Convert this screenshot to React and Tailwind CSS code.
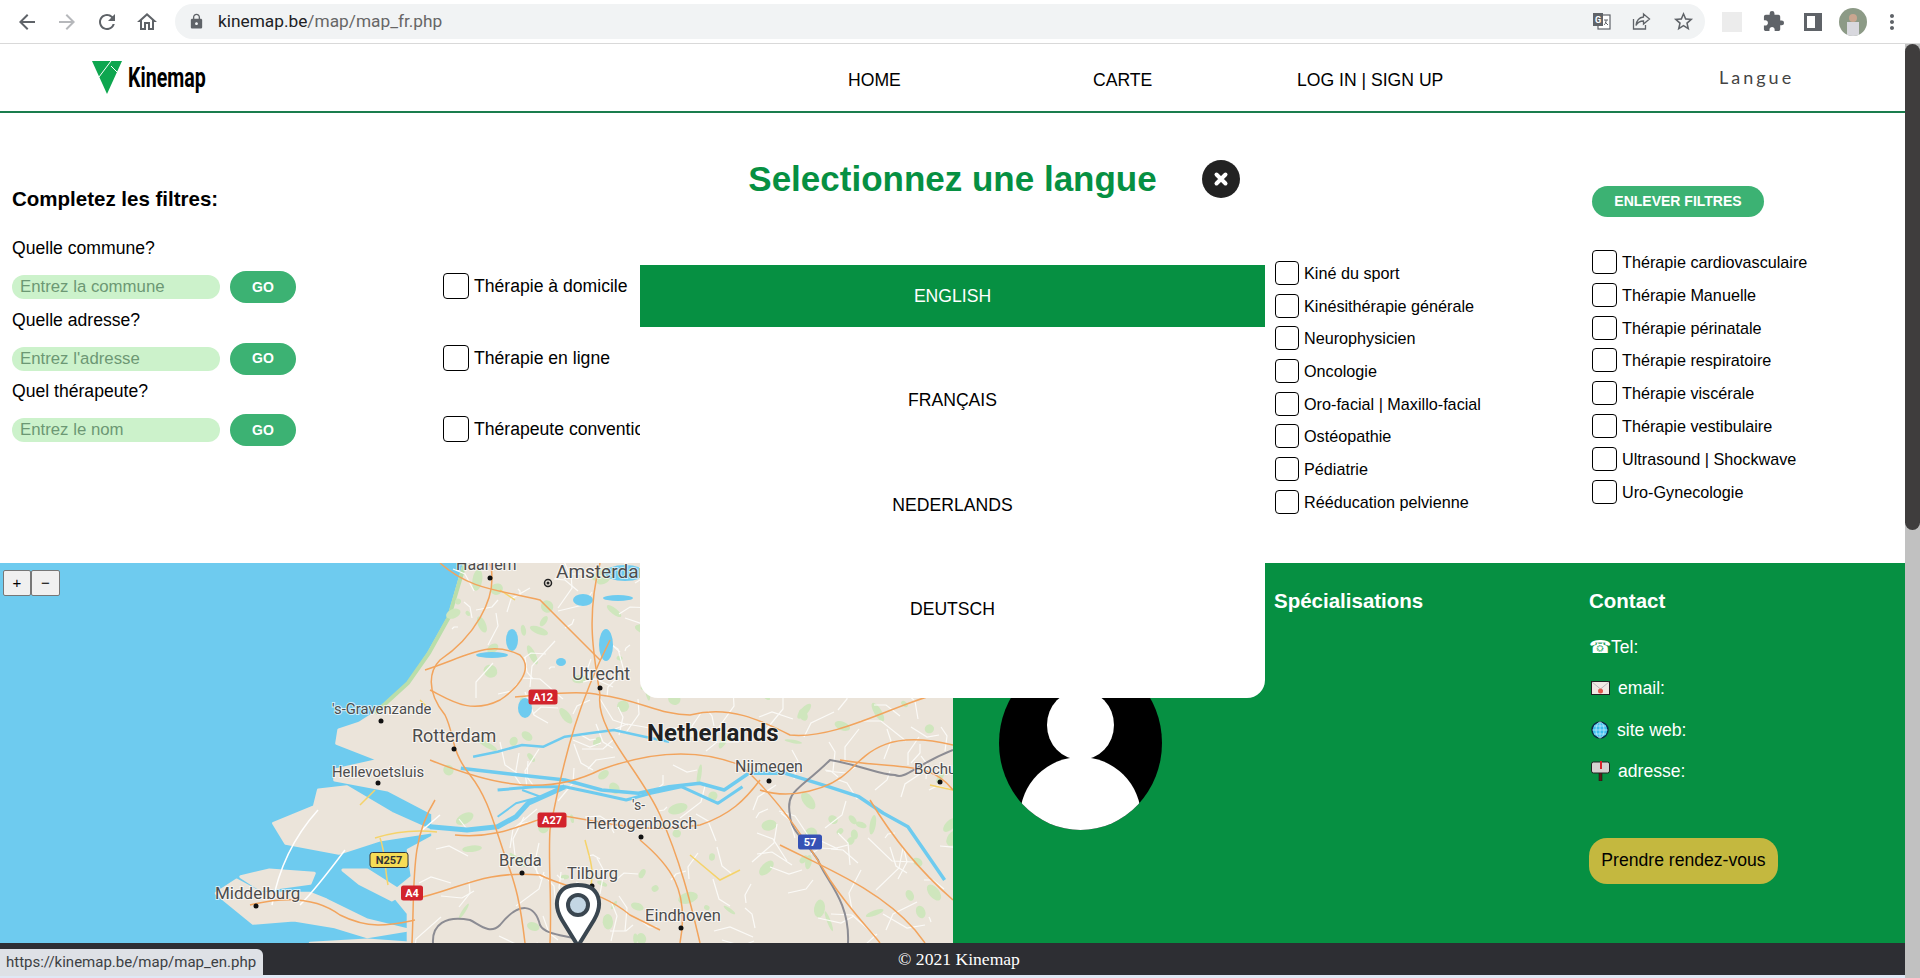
import React from 'react'
import { MdArrowBack, MdArrowForward, MdRefresh, MdOutlineHome, MdLock, MdStarBorder, MdExtension, MdMoreVert } from 'react-icons/md'

const col3 = ['Kiné du sport', 'Kinésithérapie générale', 'Neurophysicien', 'Oncologie', 'Oro-facial | Maxillo-facial', 'Ostéopathie', 'Pédiatrie', 'Rééducation pelvienne']
const col4 = ['Thérapie cardiovasculaire', 'Thérapie Manuelle', 'Thérapie périnatale', 'Thérapie respiratoire', 'Thérapie viscérale', 'Thérapie vestibulaire', 'Ultrasound | Shockwave', 'Uro-Gynecologie']

const fields = [
  { label: 'Quelle commune?', placeholder: 'Entrez la commune' },
  { label: 'Quelle adresse?', placeholder: "Entrez l'adresse" },
  { label: 'Quel thérapeute?', placeholder: 'Entrez le nom' },
]

const SEA = '#6ecbef'
const LAND = '#ebe4da'

// land outlines, noted from the map in the screenshot
const toPoly = (pts) => 'M' + pts.map(([x, y]) => `${(x / 2.45).toFixed(1)} ${(y / 3 + 560).toFixed(1)}`).join(' L') + ' Z'
const landPieces = [
  [[1140, 0], [1100, 170], [1050, 280], [1000, 370], [930, 450], [880, 490], [830, 510], [825, 550], [930, 600], [820, 630], [820, 660], [950, 690], [1060, 760], [1060, 830], [1000, 870], [1010, 950], [960, 1000], [1000, 1060], [1000, 1100], [1000, 1150], [2400, 1150], [2400, 0]],
  [[670, 790], [770, 740], [780, 690], [850, 680], [960, 760], [1060, 815], [930, 840], [830, 880], [700, 850]],
  [[590, 950], [660, 930], [770, 940], [760, 970], [640, 990]],
  [[840, 930], [900, 930], [990, 1000], [960, 1020], [880, 970]],
  [[530, 1000], [580, 960], [640, 1000], [760, 1000], [800, 1020], [900, 1080], [1000, 1110], [900, 1130], [820, 1100], [720, 1080], [620, 1090]],
  [[760, 1150], [900, 1140], [1010, 1150]],
]

const toLine = (pts) => 'M' + pts.map(([x, y]) => `${(x / 1.633 + 320).toFixed(1)} ${(y / 3 + 560).toFixed(1)}`).join(' L')
const rivers = [
  { w: 2.5, pts: [[250, 590], [290, 575], [330, 555], [365, 560], [400, 530], [440, 520], [480, 510], [530, 530], [570, 545]] },
  { w: 3.5, pts: [[230, 625], [300, 640], [400, 660], [460, 690], [520, 700], [570, 680], [620, 670], [660, 690], [700, 640], [760, 640], [830, 680], [880, 710], [920, 760], [960, 800], [990, 880], [1020, 960]] },
  { w: 3, pts: [[290, 690], [350, 680], [400, 680], [450, 700], [500, 720], [540, 700], [590, 680], [650, 730], [690, 680]] },
  { w: 5, pts: [[180, 800], [240, 810], [290, 800], [320, 770], [340, 730], [400, 680]] },
  { w: 2, pts: [[290, 770], [320, 730], [360, 710], [330, 690]] },
]
const lakes = [[525, 708, 7, 10], [606, 645, 7, 16], [583, 600, 10, 6], [512, 640, 6, 11], [492, 655, 16, 3], [561, 662, 5, 4], [625, 573, 20, 8], [618, 598, 15, 3]]

const orangeRoads = [
  'M490 563 C500 600 470 640 440 660 C430 670 425 690 445 715 C455 735 450 750 470 775 C490 800 495 830 510 870 C515 885 520 900 525 943',
  'M425 670 C470 655 490 640 520 655 C535 670 515 690 500 700 C470 715 450 700 430 690',
  'M515 697 C540 695 580 690 600 695 C640 700 660 715 690 715 C730 705 760 720 790 735 C840 740 900 700 953 690',
  'M600 563 C585 620 595 660 600 695 C595 730 640 770 660 815 C680 860 690 900 700 943',
  'M610 640 C580 700 565 750 550 830 C548 860 552 900 550 943',
  'M430 760 C480 780 540 800 600 770 C640 755 690 745 740 765 C770 790 800 830 830 880 C850 910 870 930 880 943',
  'M435 800 C410 840 415 880 412 943',
  'M455 835 C500 840 530 820 555 815 C600 820 640 835 700 825 C730 815 745 800 760 780',
  'M640 840 C670 865 690 890 680 943',
  'M780 845 C830 870 880 890 915 930 L925 943',
  'M410 900 C460 890 480 870 540 875 C570 890 600 890 630 915 L660 930',
  'M760 790 C790 800 830 790 850 770 C870 750 890 730 953 745',
  'M250 905 C290 895 320 900 340 915 C370 930 390 925 415 920',
  'M440 563 C470 590 500 590 540 600 C560 620 580 640 600 660',
  'M840 760 C900 770 930 760 953 790',
  'M870 800 C900 850 930 880 953 900',
]
const yellowRoads = [
  'M360 805 L375 790 M375 838 C400 830 420 830 437 832 M380 838 C385 850 385 870 388 885',
  'M500 590 L515 600 M690 855 L720 880 L740 870 M585 840 C590 860 595 870 590 890',
  'M930 785 L953 790 M420 700 L430 710',
]
const labels = [
  { t: 'Haarlem', x: 456, y: 570, s: 16 },
  { t: 'Amsterdam', x: 556, y: 578, s: 19 },
  { t: 'Utrecht', x: 572, y: 680, s: 18 },
  { t: "'s-Gravenzande", x: 332, y: 714, s: 14.8 },
  { t: 'Rotterdam', x: 412, y: 742, s: 18 },
  { t: 'Hellevoetsluis', x: 332, y: 777, s: 14.8 },
  { t: 'Nijmegen', x: 735, y: 772, s: 16 },
  { t: 'Bochum', x: 914, y: 774, s: 15 },
  { t: "'s-", x: 632, y: 810, s: 14 },
  { t: 'Hertogenbosch', x: 586, y: 829, s: 16.2 },
  { t: 'Breda', x: 499, y: 866, s: 16.5 },
  { t: 'Tilburg', x: 567, y: 879, s: 16.5 },
  { t: 'Eindhoven', x: 645, y: 921, s: 16.5 },
  { t: 'Middelburg', x: 215, y: 899, s: 17 },
]
const dots = [[490, 578], [600, 688], [381, 721], [454, 749], [378, 783], [769, 781], [940, 782], [641, 837], [522, 873], [592, 886], [681, 928], [256, 906]]
const signs = [
  { t: 'A12', x: 543, y: 697, w: 29, fill: '#d2232c', c: '#fff' },
  { t: 'A27', x: 552, y: 820, w: 29, fill: '#d2232c', c: '#fff' },
  { t: 'A4', x: 412, y: 893, w: 22, fill: '#d2232c', c: '#fff' },
  { t: 'N257', x: 389, y: 860, w: 38, fill: '#f6dc55', c: '#333' },
  { t: '57', x: 810, y: 842, w: 24, fill: '#3552b5', c: '#fff' },
]

// fixed seed, so the small map texture is the same on every load
const seeded = (seed) => () => {
  seed = (seed * 16807) % 2147483647
  return seed / 2147483647
}
const rnd = seeded(4711)
const minorRoads = Array.from({ length: 190 }, () => {
  const x = 440 + rnd() * 513
  const y = 563 + rnd() * 380
  const dx = (rnd() - 0.5) * 50
  const dy = (rnd() - 0.5) * 50
  return `M${x.toFixed(0)} ${y.toFixed(0)} L${(x + dx).toFixed(0)} ${(y + dy).toFixed(0)} L${(x + dx * 1.5 + dy * 0.4).toFixed(0)} ${(y + dy * 1.5 - dx * 0.4).toFixed(0)}`
})
const greenBits = Array.from({ length: 120 }, () => ({
  x: 445 + rnd() * 508,
  y: 563 + rnd() * 380,
  rx: 2 + rnd() * 9,
  ry: 1.5 + rnd() * 5,
  r: rnd() * 180,
}))

const MapView = () => (
  <svg viewBox="0 563 953 380" className="block w-[953px] h-[380px]" preserveAspectRatio="none">
    <rect x="0" y="563" width="953" height="380" fill={SEA} />
    {landPieces.map((pts, i) => (
      <path key={i} d={toPoly(pts)} fill={LAND} stroke={LAND} strokeWidth="3" strokeLinejoin="round" />
    ))}
    <path d="M465 563 L449 617 L429 653 L408 683 L375 713" fill="none" stroke="#b9deaa" strokeWidth="4" />
    {greenBits.map((g, i) => (
      <ellipse key={i} cx={g.x} cy={g.y} rx={g.rx} ry={g.ry} transform={`rotate(${g.r.toFixed(0)} ${g.x.toFixed(0)} ${g.y.toFixed(0)})`} fill="#cfe6bd" />
    ))}
    {minorRoads.map((d, i) => (
      <path key={i} d={d} fill="none" stroke="#fbfaf7" strokeWidth="1.2" />
    ))}
    <path d="M318 810 C300 830 280 860 272 905 M345 850 C330 870 315 890 300 905 M420 832 L440 815" fill="none" stroke="#fff" strokeWidth="1.5" />
    {lakes.map(([x, y, rx, ry], i) => (
      <ellipse key={i} cx={x} cy={y} rx={rx} ry={ry} fill={SEA} />
    ))}
    {rivers.map((r, i) => (
      <path key={i} d={toLine(r.pts)} fill="none" stroke={SEA} strokeWidth={r.w} strokeLinejoin="round" />
    ))}
    <path d="M433 943 C432 925 445 915 470 920 C480 925 490 935 500 925 C520 900 535 905 540 925 C545 935 565 935 580 940 M848 943 C850 900 825 880 818 860 C805 840 790 830 790 815 C785 790 800 790 830 760 C860 765 880 775 895 775 C905 780 915 765 953 750" fill="none" stroke="#8c8c93" strokeWidth="2" />
    {yellowRoads.map((d, i) => (
      <path key={i} d={d} fill="none" stroke="#f5d36a" strokeWidth="1.5" />
    ))}
    {orangeRoads.map((d, i) => (
      <path key={i} d={d} fill="none" stroke="#f2a45d" strokeWidth="1.5" />
    ))}
    {dots.map(([x, y], i) => (
      <circle key={i} cx={x} cy={y} r="2.5" fill="#111" />
    ))}
    <circle cx="548" cy="583" r="3.5" fill="none" stroke="#222" strokeWidth="1.5" />
    <circle cx="548" cy="583" r="1.5" fill="#222" />
    {labels.map((l) => (
      <text key={l.t} x={l.x} y={l.y} fontSize={l.s} fontFamily="Roboto, sans-serif" fill="#4c4c4c" stroke="#ffffffaa" strokeWidth="2" paintOrder="stroke">
        {l.t}
      </text>
    ))}
    <text x="647" y="741" fontSize="24" fontWeight="700" fontFamily="Roboto, sans-serif" fill="#222" stroke="#ffffffaa" strokeWidth="2" paintOrder="stroke">Netherlands</text>
    {signs.map((s) => (
      <g key={s.t}>
        <rect x={s.x - s.w / 2} y={s.y - 7.5} width={s.w} height="15" rx="2.5" fill={s.fill} stroke={s.c === '#333' ? '#333' : 'none'} />
        <text x={s.x} y={s.y + 4} textAnchor="middle" fontSize="11" fontWeight="700" fontFamily="Roboto, sans-serif" fill={s.c}>{s.t}</text>
      </g>
    ))}
    {/* pin */}
    <path d="M578 946 L562 920 C553 905 555 885 578 885 C601 885 603 905 594 920 Z" fill="#fff" stroke="#3a4650" strokeWidth="4" strokeLinejoin="round" />
    <circle cx="578" cy="905" r="10" fill="#c3d6e4" stroke="#3a4650" strokeWidth="4" />
  </svg>
)

const Checkbox = ({ size }) => (
  <input type="checkbox" className={`appearance-none shrink-0 border border-black rounded-[4px] bg-white ${size}`} />
)

const ChromeBar = () => (
  <div className="h-[44px] shrink-0 flex items-center bg-white border-b border-[#d9d9d9] text-[#5f6368]">
    <div className="w-[175px] flex items-center pl-[15px] gap-4">
      <MdArrowBack size={24} />
      <MdArrowForward size={24} className="text-[#b6b8bb]" />
      <MdRefresh size={24} />
      <MdOutlineHome size={24} />
    </div>
    <div className="w-[1530px] h-[35px] rounded-full bg-[#f1f3f4] flex items-center pl-[13px]">
      <MdLock size={17} />
      <span className="ml-[13px] text-[17.3px] font-['Roboto',sans-serif] text-[#666]">
        <span className="text-[#202124]">kinemap.be</span>/map/map_fr.php
      </span>
      <div className="ml-auto flex items-center gap-[21px] pr-[10px]">
        <svg width="19" height="19" viewBox="0 0 19 19">
          <rect x="6" y="3" width="12" height="14" fill="#fff" stroke="#5f6368" strokeWidth="1.2" />
          <rect x="1" y="1" width="10" height="13" fill="#5f6368" />
          <text x="3" y="11" fontSize="9" fontWeight="700" fontFamily="Roboto, sans-serif" fill="#fff">G</text>
          <path d="M12 8h4M14 8v1c0 2-1 3-2 4M13 10l3 3" fill="none" stroke="#5f6368" strokeWidth="1" />
        </svg>
        <svg width="19" height="19" viewBox="0 0 19 19" fill="none" stroke="#5f6368" strokeWidth="1.3">
          <path d="M1.5 7v10h12v-4" />
          <path d="M11.5 2l6 5-6 5V9c-4 0-6 1.5-7.5 4.5C4.5 9 7 5.5 11.5 5z" />
        </svg>
        <MdStarBorder size={23} />
      </div>
    </div>
    <div className="flex-1 flex items-center pl-[17px]">
      <div className="w-[20px] h-[20px] bg-[#ececec]" />
      <MdExtension size={23} className="ml-[20px]" />
      <div className="ml-[19px] w-[18px] h-[18px] border-[3px] border-r-[7px] border-[#5f6368]" />
      <div className="ml-[17px] w-[28px] h-[28px] rounded-full bg-[#8c9a86] overflow-hidden flex flex-col items-center justify-end">
        <div className="w-[8px] h-[8px] rounded-full bg-[#c9a690]" />
        <div className="w-[12px] h-[14px] bg-[#d8d8de]" />
      </div>
      <MdMoreVert size={24} className="ml-[13px]" />
    </div>
  </div>
)

const Filters = () => (
  <div className="h-[450px] shrink-0 flex font-['Liberation_Sans',Arial,sans-serif] text-black">
    <div className="w-[443px] pl-3 pt-[72px]">
      <h2 className="text-[20.5px] leading-[28px] font-bold">Completez les filtres:</h2>
      <div className="mt-[23px] flex flex-col">
        {fields.map((f) => (
          <div key={f.label} className="h-[71.5px]">
            <p className="text-[17.6px] leading-[24px] h-[24px]">{f.label}</p>
            <div className="flex items-center gap-[10px] mt-[11px]">
              <input placeholder={f.placeholder} className="w-[208px] h-[24px] rounded-full bg-[#ccf2cb] pl-[8px] pr-[7px] text-[16.8px] outline-none placeholder:text-[#6c9874]" />
              <button className="w-[66px] h-[32px] rounded-full bg-[#3cb273] text-white text-[14px] font-bold">GO</button>
            </div>
          </div>
        ))}
      </div>
    </div>
    <div className="w-[832px] pt-[160px] flex flex-col gap-[45.5px]">
      {['Thérapie à domicile', 'Thérapie en ligne', 'Thérapeute conventionnel'].map((t) => (
        <label key={t} className="flex items-center gap-[5px] text-[17.6px] leading-[26px]">
          <Checkbox size="w-[26px] h-[26px]" />
          {t}
        </label>
      ))}
    </div>
    <div className="w-[317px] pt-[148px] flex flex-col gap-[8.7px]">
      {col3.map((t) => (
        <label key={t} className="flex items-center gap-[5px] text-[16.2px] leading-[24px]">
          <Checkbox size="w-[24px] h-[24px]" />
          {t}
        </label>
      ))}
    </div>
    <div className="flex-1 pt-[73px]">
      <button className="w-[172px] h-[31px] rounded-full bg-[#3cb273] text-white text-[14px] font-bold">ENLEVER FILTRES</button>
      <div className="mt-[33px] flex flex-col gap-[8.8px]">
        {col4.map((t) => (
          <label key={t} className="flex items-center gap-[5px] text-[16.2px] leading-[24px]">
            <Checkbox size="w-[25px] h-[24px]" />
            {t}
          </label>
        ))}
      </div>
    </div>
  </div>
)

const Details = () => (
  <div className="w-[952px] bg-[#069042] text-white flex font-['Liberation_Sans',Arial,sans-serif]">
    <div className="w-[321px] pl-[46px] pt-[93px]">
      <div className="relative w-[163px] h-[174px] rounded-[50%] bg-black overflow-hidden">
        <div className="absolute left-[48px] top-[34px] w-[67px] h-[70px] rounded-[50%] bg-white" />
        <div className="absolute left-[21px] top-[101px] w-[121px] h-[120px] rounded-[50%] bg-white" />
      </div>
    </div>
    <div className="w-[315px] pt-[26px]">
      <h3 className="text-[20.5px] leading-[24px] font-bold">Spécialisations</h3>
    </div>
    <div className="flex-1 pt-[26px]">
      <h3 className="text-[20.5px] leading-[24px] font-bold">Contact</h3>
      <div className="mt-[22px] flex flex-col gap-[17.4px] text-[17.6px] leading-[24px]">
        <p className="flex items-center h-[24px]">
          <span className="text-[18px] w-[22px] font-['DejaVu_Sans',sans-serif]">☎</span>Tel:
        </p>
        <p className="flex items-center h-[24px] pl-[2px]">
          <svg width="19" height="14" viewBox="0 0 19 14" className="mr-[8px]">
            <rect x="0.5" y="0.5" width="18" height="13" fill="#f2e8e4" stroke="#222" />
            <path d="M1 1l8.5 7L18 1" fill="none" stroke="#bbb" />
            <circle cx="9.5" cy="10" r="2.5" fill="#e0584c" />
          </svg>
          email:
        </p>
        <p className="flex items-center h-[24px] pl-[2px]">
          <svg width="18" height="18" viewBox="0 0 18 18" className="mr-[8px]">
            <circle cx="9" cy="9" r="8" fill="#3fc0ee" stroke="#0b2a44" strokeWidth="1.5" />
            <path d="M1.5 9h15M9 1v16M3 5h12M3 13h12" stroke="#bdeafa" strokeWidth="0.8" fill="none" />
            <ellipse cx="9" cy="9" rx="4" ry="8" fill="none" stroke="#bdeafa" strokeWidth="0.8" />
          </svg>
          site web:
        </p>
        <p className="flex items-center h-[24px] pl-[2px]">
          <svg width="19" height="20" viewBox="0 0 19 20" className="mr-[8px]">
            <rect x="8" y="10" width="3" height="10" fill="#5a1f1a" stroke="#111" strokeWidth="0.5" />
            <rect x="0.5" y="1" width="18" height="11" rx="2" fill="#d5d2d0" stroke="#222" />
            <rect x="9" y="0" width="2" height="8" fill="#d8232a" />
          </svg>
          adresse:
        </p>
      </div>
      <button className="mt-[55px] w-[189px] h-[46px] pb-[1px] rounded-[18px] bg-[#c4b83f] text-black text-[17.6px]">Prendre rendez-vous</button>
    </div>
  </div>
)

const LanguageModal = () => (
  <div className="absolute left-[640px] top-[150px] w-[625px] h-[548px] bg-white rounded-b-[18px] font-['Liberation_Sans',Arial,sans-serif] text-black">
    <div className="relative h-[115px] pt-[6px] text-center">
      <h2 className="text-[35px] leading-[46px] font-bold text-[#069042]">Selectionnez une langue</h2>
      <button className="absolute left-[562px] top-[10px] w-[38px] h-[38px] rounded-full bg-[#222] flex items-center justify-center">
        <svg width="16" height="16" viewBox="0 0 16 16" stroke="#fff" strokeWidth="4" strokeLinecap="round">
          <path d="M3.5 3.5l9 9M12.5 3.5l-9 9" />
        </svg>
      </button>
    </div>
    <div className="flex flex-col gap-[42.5px] text-[17.6px] text-center">
      <div className="h-[62px] flex items-center justify-center bg-[#069042] text-white">ENGLISH</div>
      <div className="h-[62px] flex items-center justify-center">FRANÇAIS</div>
      <div className="h-[62px] flex items-center justify-center">NEDERLANDS</div>
      <div className="h-[62px] flex items-center justify-center">DEUTSCH</div>
    </div>
  </div>
)

const App = () => {
  return (
    <div className="relative w-[1920px] h-[978px] overflow-hidden flex flex-col bg-white">
      <ChromeBar />
      <div className="flex flex-1 min-h-0">
        <div className="w-[1905px] flex flex-col">
          <header className="h-[69px] shrink-0 border-b-2 border-[#1a7d4d] flex items-center font-['Liberation_Sans',Arial,sans-serif] text-[17.6px] text-black">
            <div className="w-[848px] pl-[92px] flex items-center">
              <svg width="30" height="33" viewBox="0 0 30 33">
                <path d="M0 0h30L15 33z" fill="#0ea64f" />
                <path d="M19 0L7 16M19 5l8 8" stroke="#fff" strokeWidth="1" fill="none" />
              </svg>
              <span className="ml-[6px] w-[77px] text-[28px] leading-[32px] font-bold font-['Roboto',sans-serif] origin-left scale-x-[0.7] whitespace-nowrap">Kinemap</span>
            </div>
            <a className="w-[245px] mt-[5px]">HOME</a>
            <a className="w-[204px] mt-[5px]">CARTE</a>
            <a className="w-[422px] mt-[5px]">LOG IN | SIGN UP</a>
            <a className="font-['Lato',sans-serif] text-[#444] text-[18px] tracking-[3px]">Langue</a>
          </header>
          <Filters />
          <div className="h-[380px] shrink-0 flex">
            <div className="relative w-[953px] h-[380px]">
              <MapView />
              <div className="absolute left-[3px] top-[7px] flex font-['Liberation_Sans',Arial,sans-serif] text-[15px] text-black">
                <button className="w-[28px] h-[26px] bg-[#f0f0f0] border border-[#777] rounded-[2px]">+</button>
                <button className="w-[29px] h-[26px] bg-[#f0f0f0] border border-[#777] rounded-[2px]">−</button>
              </div>
            </div>
            <Details />
          </div>
          <footer className="h-[32px] shrink-0 bg-[#2d2e33] flex items-center justify-center pl-[13px] text-white text-[17.6px] font-['Liberation_Serif',serif]">
            © 2021 Kinemap
          </footer>
          <div className="flex-1 bg-[#dfe8f5]" />
        </div>
        <div className="w-[15px] bg-[#c1c1c1] relative">
          <div className="absolute inset-x-0 top-0 h-[486px] bg-[#3f3d3d] rounded-full" />
        </div>
      </div>
      <LanguageModal />
      <div className="absolute left-0 top-[949px] h-[27px] w-[263px] bg-[#dee1e6] rounded-tr-[6px] flex items-center pl-[6px] text-[15px] text-[#3c4043] font-['Roboto',sans-serif]">
        https://kinemap.be/map/map_en.php
      </div>
    </div>
  )
}

export default App
